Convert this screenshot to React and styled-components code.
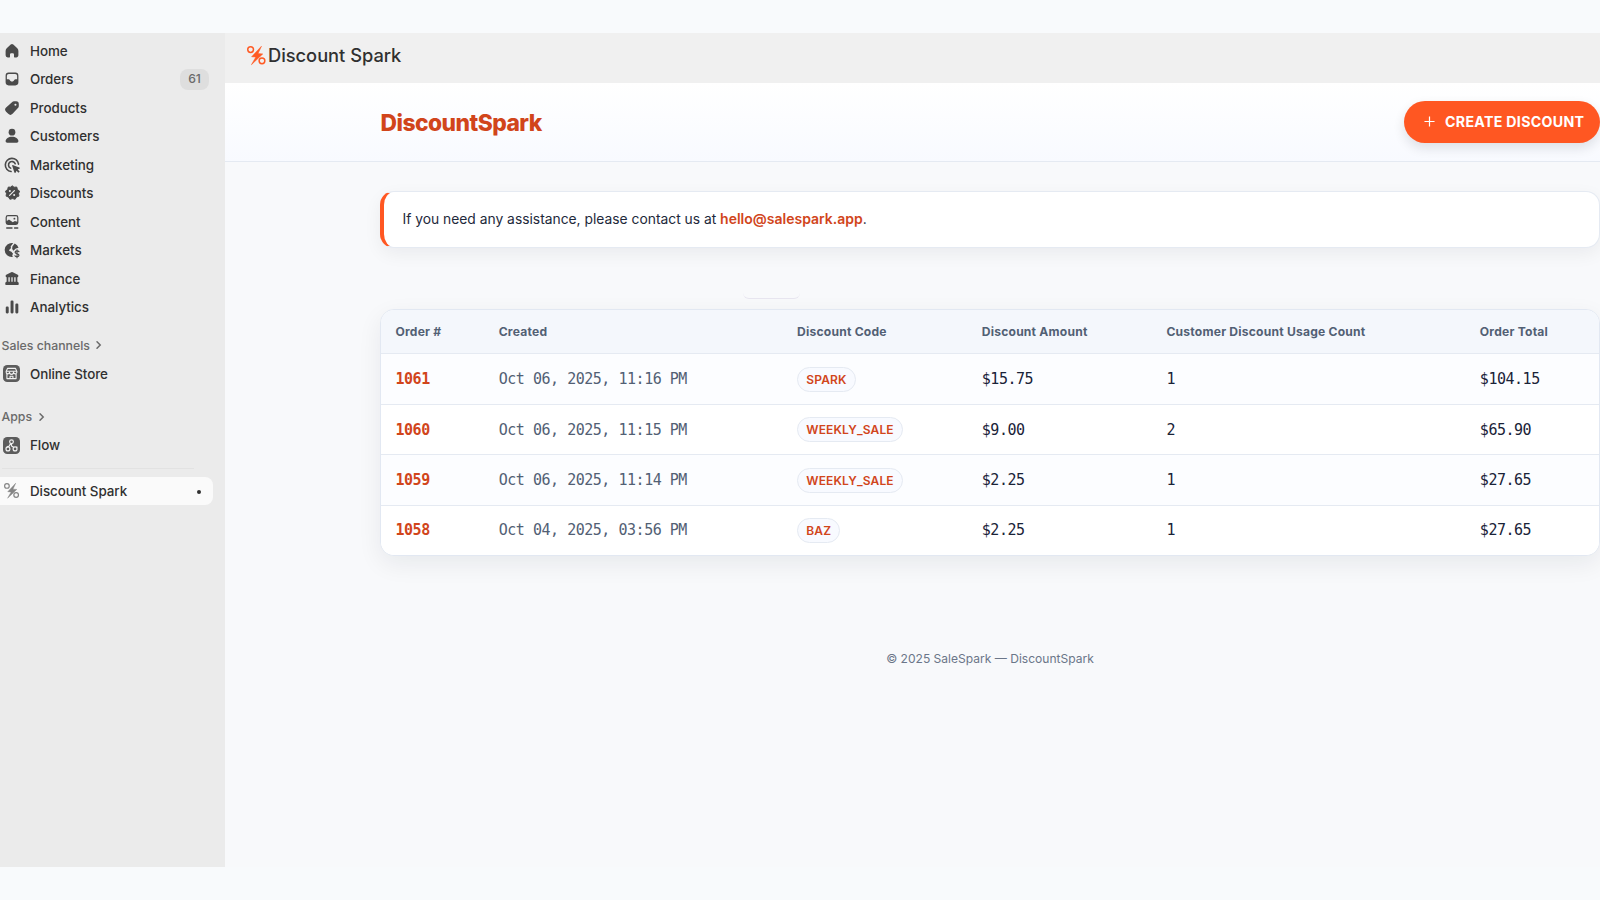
import React from "react";
import styled, { createGlobalStyle } from "styled-components";

const orders = [
  { id: "1061", created: "Oct 06, 2025, 11:16 PM", code: "SPARK", amount: "$15.75", count: 1, total: "$104.15" },
  { id: "1060", created: "Oct 06, 2025, 11:15 PM", code: "WEEKLY_SALE", amount: "$9.00", count: 2, total: "$65.90" },
  { id: "1059", created: "Oct 06, 2025, 11:14 PM", code: "WEEKLY_SALE", amount: "$2.25", count: 1, total: "$27.65" },
  { id: "1058", created: "Oct 04, 2025, 03:56 PM", code: "BAZ", amount: "$2.25", count: 1, total: "$27.65" },
];

const HomeIcon = () => (
  <Icon>
    <path d="M8.4 1.9a2.3 2.3 0 0 1 3.2 0l5 4.8c.9.9 1.4 2 1.4 3.2v5.4c0 1.5-1.2 2.7-2.7 2.7h-2.1a.7.7 0 0 1-.7-.7v-3a1.5 1.5 0 0 0-1.5-1.5H9a1.5 1.5 0 0 0-1.5 1.5v3a.7.7 0 0 1-.7.7H4.7A2.7 2.7 0 0 1 2 15.3V9.9c0-1.2.5-2.3 1.4-3.2z" />
  </Icon>
);

const OrdersIcon = () => (
  <Icon>
    <path
      fillRule="evenodd"
      d="M5.8 2h8.4A3.8 3.8 0 0 1 18 5.8v8.4a3.8 3.8 0 0 1-3.8 3.8H5.8A3.8 3.8 0 0 1 2 14.2V5.8A3.8 3.8 0 0 1 5.8 2zM6 3.6A2.4 2.4 0 0 0 3.6 6v4.3h2c.7 0 1.3.4 1.6 1l.3.7c.3.6.9 1 1.6 1h1.8c.7 0 1.3-.4 1.6-1l.3-.7c.3-.6.9-1 1.6-1h2V6A2.4 2.4 0 0 0 14 3.6z"
    />
  </Icon>
);

const TagIcon = () => (
  <Icon>
    <path
      fillRule="evenodd"
      d="M10 2.9A3.6 3.6 0 0 1 12.6 1.7H15.3A3.2 3.2 0 0 1 18.5 4.9V7.5A3.7 3.7 0 0 1 17.4 10.1L10.7 17.3A3.8 3.8 0 0 1 5.3 17.3L2.6 14.6A3.6 3.6 0 0 1 2.6 9.5zM14.3 7.2a1.3 1.3 0 1 0 0-2.6 1.3 1.3 0 0 0 0 2.6z"
    />
  </Icon>
);

const PersonIcon = () => (
  <Icon>
    <circle cx="10" cy="5.2" r="4.2" />
    <path d="M2 16.4c0-3 3.6-5.4 8-5.4s8 2.4 8 5.4c0 1.2-.8 2.1-2 2.1H4c-1.2 0-2-.9-2-2.1z" />
  </Icon>
);

const TargetIcon = () => (
  <Icon>
    <g fill="none" stroke="currentColor" strokeWidth="2" strokeLinecap="round">
      <path d="M18.2 9A8.3 8.3 0 1 0 8.8 18.2" />
      <path d="M14 8.5A4.3 4.3 0 1 0 8.3 13.9" />
    </g>
    <path d="M10.3 11.4c-.3-.8.4-1.5 1.2-1.2l7.7 2.9c.8.3.8 1.4 0 1.7l-2 .9 2.4 2.5-1.5 1.5-2.5-2.4-.9 2c-.4.8-1.5.7-1.7 0z" />
  </Icon>
);

const DiscountIcon = () => (
  <Icon>
    <path
      d="M10 .9l2.6 1.9 3.3-.3.9 3.2 2.7 2-1.3 3 .5 3.2-3.1 1.1-1.7 2.9-3.2-.9-3.3.9-1.7-2.9-3.1-1.1.5-3.2-1.3-3 2.7-2 .9-3.2 3.3.3z"
      stroke="currentColor"
      strokeWidth="1.2"
      strokeLinejoin="round"
    />
    <path d="M7 13L13 7" fill="none" stroke="#ebebeb" strokeWidth="1.5" strokeLinecap="round" />
    <circle cx="7.3" cy="7.5" r="1.3" fill="#ebebeb" />
    <circle cx="12.7" cy="12.5" r="1.3" fill="#ebebeb" />
  </Icon>
);

const ContentIcon = () => (
  <Icon>
    <path
      fillRule="evenodd"
      d="M5 1.3h10a3 3 0 0 1 3 3v6.4a3 3 0 0 1-3 3H5a3 3 0 0 1-3-3V4.3a3 3 0 0 1 3-3zM5 2.9A1.5 1.5 0 0 0 3.5 4.4V8.6L6.2 6.9 11 10.4 13.6 8.6l2.9 1.2V4.4A1.5 1.5 0 0 0 15 2.9z"
    />
    <circle cx="13" cy="5.8" r="1.2" />
    <path d="M3.4 17.5H10M13.2 17.5h4" stroke="currentColor" strokeWidth="1.7" strokeLinecap="round" />
  </Icon>
);

const MarketsIcon = () => (
  <Icon>
    <path d="M11.5 1.4A8.8 8.8 0 1 0 11 18.7L10.3 16.5 11.3 14.6 9.3 12.3 6.3 10.9 7.3 8.6 8.8 7.9 8.3 5.5z" />
    <path d="M13.4 1.9A8.7 8.7 0 0 1 18.2 7.2L14.8 8.2 11.6 10.8 10.2 8.4 10.5 5.7z" />
    <path
      d="M18.6 12.1c-.5-.8-1.3-1.1-2.4-1.1-1.4 0-2.3.7-2.3 1.8s.9 1.6 2.4 1.9 2.4.8 2.4 1.9-1 1.8-2.4 1.8c-1.2 0-2.1-.4-2.6-1.2M16.3 9.7v10"
      fill="none"
      stroke="currentColor"
      strokeWidth="1.5"
      strokeLinecap="round"
    />
  </Icon>
);

const BankIcon = () => (
  <Icon>
    <path d="M9 1.5a2 2 0 0 1 2 0l6.2 3.3c1.5.8.9 3.1-.8 3.1H3.6C1.9 7.9 1.3 5.6 2.8 4.8z" />
    <path d="M3.3 7h2.2v7H3.3zM7.2 7h2v7h-2zM10.8 7h2v7h-2zM14.5 7h2.2v7h-2.2z" />
    <path d="M3.3 13.5h13.4c1 0 1.7.9 1.7 2v.7c0 .7-.5 1.3-1.2 1.3H2.8c-.7 0-1.2-.6-1.2-1.3v-.7c0-1.1.7-2 1.7-2z" />
  </Icon>
);

const BarsIcon = () => (
  <Icon>
    <rect x="2.2" y="9.5" width="3.7" height="8.5" rx="1.4" />
    <rect x="8.2" y="2" width="3.7" height="16" rx="1.4" />
    <rect x="14.2" y="5.7" width="3.7" height="12.3" rx="1.4" />
  </Icon>
);

const StoreIcon = () => (
  <AppIcon viewBox="0 0 20 20">
    <rect width="20" height="20" rx="5" fill="#5c5c5c" />
    <g fill="none" stroke="#f1f1f1" strokeWidth="1.3" strokeLinejoin="round">
      <path d="M5.3 4h9.4L16.3 7.5v.8a1.9 1.9 0 0 1-3.9.3 2.3 2.3 0 0 1-4.8 0 1.9 1.9 0 0 1-3.9-.3v-.8zM3.8 7.3h12.4M4.6 10.5V16h10.8v-5.5M8.3 16v-2.7h3.4V16" />
    </g>
  </AppIcon>
);

const FlowIcon = () => (
  <AppIcon viewBox="0 0 20 20">
    <rect width="20" height="20" rx="5" fill="#5c5c5c" />
    <g fill="none" stroke="#f1f1f1" strokeWidth="1.4">
      <circle cx="10" cy="5.5" r="2.2" />
      <circle cx="5.8" cy="14" r="2.3" />
      <circle cx="14.2" cy="14" r="2.3" />
      <path d="M9 7.6L6.5 11.7M10 7.7v2.8l3 1.9M3.8 12.8l2.4-2M16.2 12.8v-1.5" />
    </g>
  </AppIcon>
);

const SparkLogo = ({ size, color }) => (
  <Logo viewBox="0 0 20 20" $size={size} $color={color}>
    <circle cx="3.9" cy="3.9" r="3.1" fill="none" stroke="currentColor" strokeWidth="1.6" />
    <circle cx="16.2" cy="16" r="3.1" fill="none" stroke="currentColor" strokeWidth="1.6" />
    <path
      d="M15.6.3L5 11.6 9.6 11.9 4.8 20.2 17 8.6 11.9 8.2z"
      stroke="currentColor"
      strokeWidth=".6"
      strokeLinejoin="round"
    />
  </Logo>
);

const Chevron = () => (
  <ChevronSvg viewBox="0 0 8 10">
    <path d="M2 1.8L5.2 5 2 8.2" />
  </ChevronSvg>
);

const navItems = [
  { label: "Home", icon: HomeIcon },
  { label: "Orders", icon: OrdersIcon, badge: 61 },
  { label: "Products", icon: TagIcon },
  { label: "Customers", icon: PersonIcon },
  { label: "Marketing", icon: TargetIcon },
  { label: "Discounts", icon: DiscountIcon },
  { label: "Content", icon: ContentIcon },
  { label: "Markets", icon: MarketsIcon },
  { label: "Finance", icon: BankIcon },
  { label: "Analytics", icon: BarsIcon },
];

const Sidebar = () => (
  <SidebarBox>
    {navItems.map(({ label, icon: ItemIcon, badge }) => (
      <NavItem key={label}>
        <IconSlot>
          <ItemIcon />
        </IconSlot>
        {label}
        {badge && <Badge>{badge}</Badge>}
      </NavItem>
    ))}
    <SectionTitle $top={9.7}>
      Sales channels <Chevron />
    </SectionTitle>
    <NavItem>
      <IconSlot>
        <StoreIcon />
      </IconSlot>
      Online Store
    </NavItem>
    <SectionTitle $top={14.2}>
      Apps <Chevron />
    </SectionTitle>
    <NavItem>
      <IconSlot>
        <FlowIcon />
      </IconSlot>
      Flow
    </NavItem>
    <Divider />
    <NavItem $active>
      <IconSlot>
        <SparkLogo size={15} color="#858585" />
      </IconSlot>
      Discount Spark
      <Dot />
    </NavItem>
  </SidebarBox>
);

const OrdersTable = () => (
  <Table>
    <HeadRow>
      <span>Order #</span>
      <span>Created</span>
      <span>Discount Code</span>
      <span>Discount Amount</span>
      <span>Customer Discount Usage Count</span>
      <span>Order Total</span>
    </HeadRow>
    {orders.map((order) => (
      <Row key={order.id}>
        <OrderId>{order.id}</OrderId>
        <Created>{order.created}</Created>
        <CodeCell>
          <Code>{order.code}</Code>
        </CodeCell>
        <span>{order.amount}</span>
        <span>{order.count}</span>
        <span>{order.total}</span>
      </Row>
    ))}
  </Table>
);

const App = () => {
  return (
    <Page>
      <GlobalStyle />
      <Sidebar />
      <Main>
        <TopBar>
          <SparkLogo size={18.5} color="#ff5a24" />
          Discount Spark
        </TopBar>
        <Header>
          <Title>DiscountSpark</Title>
          <CreateButton>
            <PlusSvg viewBox="0 0 12 12">
              <path d="M6 .5v11M.5 6h11" />
            </PlusSvg>
            CREATE DISCOUNT
          </CreateButton>
        </Header>
        <Body>
          <Notice>
            If you need any assistance, please contact us at&nbsp;
            <Mail>hello@salespark.app</Mail>.
          </Notice>
          <PillEdge />
          <OrdersTable />
          <Footer>© 2025 SaleSpark — DiscountSpark</Footer>
        </Body>
      </Main>
    </Page>
  );
};

const GlobalStyle = createGlobalStyle`
  * {
    box-sizing: border-box;
  }

  body {
    margin: 0;
    background: #f8fafc;
    font-family: Inter, "Liberation Sans", sans-serif;
    overflow: hidden;
  }
`;

const Page = styled.div`
  display: flex;
  width: 1600px;
  height: 900px;
  padding: 32.5px 0 33px;
  overflow: hidden;
`;

const SidebarBox = styled.nav`
  flex-shrink: 0;
  width: 225px;
  padding-top: 4px;
  background: #ebebeb;
`;

const NavItem = styled.div`
  display: flex;
  align-items: center;
  height: 28.5px;
  width: 213px;
  padding-right: 4px;
  border-radius: 0 8px 8px 0;
  background: ${(props) => (props.$active ? "#fafafa" : "transparent")};
  font-size: 13.4px;
  font-weight: 550;
  letter-spacing: -0.05px;
  color: #303030;
`;

const IconSlot = styled.span`
  display: flex;
  align-items: center;
  justify-content: center;
  width: 23px;
  margin-right: 7px;
`;

const Icon = styled.svg.attrs({ viewBox: "0 0 20 20" })`
  width: 16px;
  height: 16px;
  overflow: visible;
  fill: currentColor;
  color: #4a4a4a;
`;

const AppIcon = styled.svg`
  width: 17px;
  height: 17px;
`;

const Logo = styled.svg`
  flex-shrink: 0;
  width: ${(props) => props.$size}px;
  height: ${(props) => props.$size}px;
  overflow: visible;
  color: ${(props) => props.$color};
  fill: currentColor;
`;

const Badge = styled.span`
  margin-left: auto;
  width: 29px;
  height: 20.5px;
  border-radius: 8px;
  background: #dedede;
  color: #6a6a6a;
  font-size: 12.2px;
  line-height: 20.5px;
  text-align: center;
`;

const SectionTitle = styled.div`
  display: flex;
  align-items: center;
  gap: 5.5px;
  height: 28.5px;
  margin-top: ${(props) => props.$top}px;
  padding-left: 1.5px;
  font-size: 12.3px;
  font-weight: 500;
  color: #6a6a6a;
`;

const ChevronSvg = styled.svg`
  width: 8px;
  height: 10px;
  fill: none;
  stroke: #6a6a6a;
  stroke-width: 1.5;
  stroke-linecap: round;
`;

const Divider = styled.div`
  width: 192px;
  height: 1px;
  margin: 8.3px 0 8px 2px;
  background: #e2e2e2;
`;

const Dot = styled.span`
  width: 4px;
  height: 4px;
  margin: 2px 8px 0 auto;
  border-radius: 50%;
  background: #303030;
`;

const Main = styled.main`
  flex: 1;
  min-width: 0;
  background: #f8f9fb;
`;

const TopBar = styled.div`
  display: flex;
  align-items: center;
  gap: 3px;
  height: 50px;
  padding: 0 0 5px 21.5px;
  background: #f0f0f0;
  font-size: 18.3px;
  font-weight: 550;
  letter-spacing: -0.02px;
  color: #303030;
`;

const Header = styled.header`
  display: flex;
  align-items: center;
  justify-content: space-between;
  height: 79.5px;
  padding-left: 155.5px;
  border-bottom: 1px solid #e5eaf2;
  background: linear-gradient(#ffffff, #f8faff);
`;

const Title = styled.h1`
  margin: 2px 0 0;
  font-size: 22.8px;
  font-weight: 800;
  letter-spacing: -0.52px;
  color: #d1451b;
`;

const CreateButton = styled.button`
  display: flex;
  align-items: center;
  gap: 10.5px;
  width: 196px;
  height: 42px;
  padding: 0 0 0 19.5px;
  border: 0;
  border-radius: 21px;
  background: #ff5722;
  box-shadow: 0 5px 12px rgba(15, 23, 42, 0.12);
  color: #fff;
  font-family: inherit;
  font-size: 14.2px;
  font-weight: 700;
  letter-spacing: 0.3px;
  white-space: nowrap;
`;

const PlusSvg = styled.svg`
  width: 11px;
  height: 11px;
  fill: none;
  stroke: #fff;
  stroke-width: 1.3;
`;

const Body = styled.section`
  display: flex;
  flex-direction: column;
  padding: 29px 0 0 155px;
`;

const Notice = styled.div`
  display: flex;
  align-items: center;
  height: 56.5px;
  padding: 0 0 1px 18.5px;
  border: 1px solid #e5eaf2;
  border-left: 4px solid #ff5722;
  border-radius: 14px;
  background: #fff;
  box-shadow: 0 6px 18px rgba(15, 23, 42, 0.06);
  font-size: 13.84px;
  color: #1e293b;
`;

const Mail = styled.a`
  font-size: 14px;
  font-weight: 600;
  color: #d1451b;
`;

const PillEdge = styled.div`
  width: 57px;
  height: 6px;
  margin: 45.5px 0 9.7px 362.5px;
  border-bottom: 1px solid #e8e6f0;
  border-radius: 0 0 12px 12px;
`;

const Table = styled.div`
  border: 1px solid #e2e8f2;
  border-radius: 14px;
  background: #fff;
  box-shadow: 0 8px 24px rgba(15, 23, 42, 0.07);
  overflow: hidden;
`;

const HeadRow = styled.div`
  display: grid;
  grid-template-columns: 103.2px 298.4px 184.7px 184.7px 313.4px 1fr;
  align-items: center;
  height: 44.8px;
  padding-left: 14.5px;
  border-bottom: 1px solid #e5eaf2;
  background: #f4f7fc;
  font-size: 12.1px;
  font-weight: 700;
  letter-spacing: 0.21px;
  color: #526074;
`;

const Row = styled(HeadRow)`
  height: 50.5px;
  background: #fff;
  font-family: "DejaVu Sans Mono", monospace;
  font-size: 15px;
  font-weight: 400;
  letter-spacing: -0.475px;
  color: #1a2338;

  &:nth-child(even) {
    background: #fcfdff;
  }

  &:last-child {
    height: 49px;
    border-bottom: 0;
  }
`;

const OrderId = styled.span`
  font-weight: 700;
  color: #d1451b;
`;

const Created = styled.span`
  color: #526074;
`;

const CodeCell = styled.span`
  display: flex;
`;

const Code = styled.span`
  display: inline-flex;
  align-items: center;
  height: 25px;
  padding: 0 8.2px;
  border: 1px solid #e5eaf2;
  border-radius: 13px;
  background: #f8faff;
  font-family: Inter, sans-serif;
  font-size: 12px;
  font-weight: 600;
  letter-spacing: 0.15px;
  color: #d1451b;
`;

const Footer = styled.footer`
  margin-top: 95px;
  font-size: 12.05px;
  text-align: center;
  color: #6b7689;
`;

export default App;
